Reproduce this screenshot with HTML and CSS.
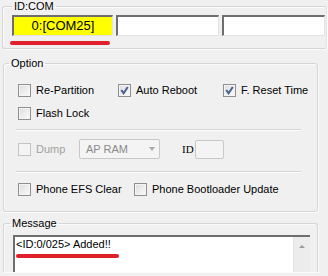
FILE: index.html
```html
<!DOCTYPE html>
<html lang="en">
<head>
    <meta charset="UTF-8">
    <title>Odin - Option</title>
    <link rel="stylesheet" href="styles.css">
</head>
<body>
    <fieldset class="grp grp-id">
        <legend>ID:COM</legend>
        <div class="ports">
            <div class="port active">0:[COM25]</div>
            <div class="port"></div>
            <div class="port"></div>
        </div>
        <div class="mark mark-port"></div>
    </fieldset>

    <fieldset class="grp grp-opt">
        <legend>Option</legend>
        <div class="row row-three">
            <label class="chk"><span class="box"></span>Re-Partition</label>
            <label class="chk"><span class="box checked"><svg viewBox="0 0 9 9"><path d="M1.3 4 L3.6 7.2 L7.8 1" /></svg></span>Auto Reboot</label>
            <label class="chk"><span class="box checked"><svg viewBox="0 0 9 9"><path d="M1.3 4 L3.6 7.2 L7.8 1" /></svg></span>F. Reset Time</label>
        </div>
        <div class="row">
            <label class="chk"><span class="box"></span>Flash Lock</label>
        </div>
        <div class="sep"></div>
        <div class="row row-dump">
            <label class="chk disabled"><span class="box"></span>Dump</label>
            <div class="combo">AP RAM<span class="arrow"></span></div>
            <span class="id-label">ID</span>
            <div class="id-box"></div>
        </div>
        <div class="sep sep-low"></div>
        <div class="row row-phone">
            <label class="chk"><span class="box"></span>Phone EFS Clear</label>
            <label class="chk"><span class="box"></span>Phone Bootloader Update</label>
        </div>
    </fieldset>

    <fieldset class="grp grp-msg">
        <legend>Message</legend>
        <div class="log">
            <div class="log-text">
                <div>&lt;ID:0/025&gt; Added!!</div>
                <div class="mark mark-log"></div>
            </div>
            <div class="scroll"><span class="up"></span></div>
        </div>
    </fieldset>
</body>
</html>
```

FILE: styles.css
```css
html, body {
    margin: 0;
    padding: 0;
}
body {
    width: 328px;
    height: 276px;
    overflow: hidden;
    background-color: #f0f0f0;
    font-family: "Liberation Sans", Arial, sans-serif;
    font-size: 11px;
    line-height: 13px;
    color: #000;
}
.grp {
    margin: 0;
    padding: 0;
    border: 1px solid #d5d5d5;
    border-radius: 3px;
    box-shadow: inset 1px 1px 0 #fbfbfb, 1px 1px 0 #fbfbfb;
}
.grp legend {
    padding: 0 2px;
}

/* ID:COM */
.grp-id {
    margin-left: 2px;
    width: 314px;
    padding: 0 0 3px 9px;
    border-right-color: #e4e4e4;
}
.ports {
    display: flex;
    gap: 3px;
    margin-top: 2px;
}
.port {
    box-sizing: border-box;
    width: 101px;
    height: 21px;
    background: #fff;
    border: 1px solid #e3e3e3;
    border-top: 2px solid #6e6e6e;
    border-left: 2px solid #6e6e6e;
    text-align: center;
    font-size: 13px;
    line-height: 18px;
}
.port + .port {
    width: 103px;
}
.port.active {
    background: #ffff00;
}
.mark {
    height: 4px;
    border-radius: 2px;
    background: #e0212b;
}
.mark-port {
    width: 100px;
    margin: 5px 0 0 -2px;
}

/* Option */
.grp-opt {
    margin: 8px 0 0 3px;
    width: 299px;
    padding: 9px 0 10px 14px;
}
.grp-opt legend {
    margin-left: -9px;
}
.row {
    display: flex;
    align-items: center;
    height: 23px;
}
.row-three .chk:nth-child(1) { width: 100px; }
.row-three .chk:nth-child(2) { width: 105px; }
.chk {
    display: flex;
    align-items: center;
}
.box {
    box-sizing: border-box;
    width: 13px;
    height: 13px;
    margin-right: 5px;
    border: 1px solid #8e8f8f;
    background: linear-gradient(135deg, #dcdcdc, #fbfbfb);
    box-shadow: inset 0 0 0 1px #f4f4f4;
    display: flex;
    align-items: center;
    justify-content: center;
}
.box svg {
    width: 9px;
    height: 9px;
}
.box svg path {
    fill: none;
    stroke: #4a5f8c;
    stroke-width: 2;
}
.disabled {
    color: #a0a0a0;
}
.disabled .box {
    border-color: #c4c4c4;
    background: #f4f4f4;
    box-shadow: none;
}
.sep {
    margin: 4px 0 0 -2px;
    width: 285px;
    height: 1px;
    background: #d5d5d5;
    border-bottom: 1px solid #fff;
}
.sep-low {
    margin-top: 12px;
}
.row-dump {
    margin-top: 8px;
    height: 20px;
}
.row-dump .chk {
    width: 61px;
}
.combo {
    box-sizing: border-box;
    position: relative;
    width: 81px;
    height: 20px;
    padding-left: 6px;
    border: 1px solid #c8c8c8;
    border-radius: 2px;
    background: #f4f4f4;
    color: #8a8a8a;
    line-height: 18px;
}
.arrow {
    position: absolute;
    right: 4px;
    top: 7px;
    border-left: 3px solid transparent;
    border-right: 3px solid transparent;
    border-top: 4px solid #a8a8a8;
}
.id-label {
    margin-left: 22px;
    width: 13px;
    font-family: "Liberation Serif", serif;
    font-size: 11px;
}
.id-box {
    box-sizing: border-box;
    width: 29px;
    height: 19px;
    border: 1px solid #c8c8c8;
    border-radius: 2px;
    background: #f4f4f4;
}
.row-phone {
    margin-top: 5px;
}
.row-phone .chk:first-child {
    width: 116px;
}

/* Message */
.grp-msg {
    margin: 5px 0 0 3px;
    width: 304px;
    padding: 5px 0 0 9px;
    border-bottom: none;
    border-radius: 3px 3px 0 0;
}
.grp-msg legend {
    margin-left: -3px;
}
.log {
    display: flex;
    width: 297px;
    height: 37px;
    border-top: 2px solid #6e6e6e;
    border-left: 2px solid #6e6e6e;
    box-sizing: border-box;
}
.log-text {
    flex: 1;
    background: #fff;
    padding: 1px 0 0 1px;
}
.mark-log {
    width: 103px;
    height: 4px;
    margin-top: 3px;
}
.scroll {
    width: 17px;
    background: #ececec;
    border-left: 1px solid #e2e2e2;
    display: flex;
    justify-content: center;
    padding-top: 8px;
    box-sizing: border-box;
}
.up {
    width: 0;
    height: 0;
    border-left: 3px solid transparent;
    border-right: 3px solid transparent;
    border-bottom: 3px solid #9a9a9a;
}
```
